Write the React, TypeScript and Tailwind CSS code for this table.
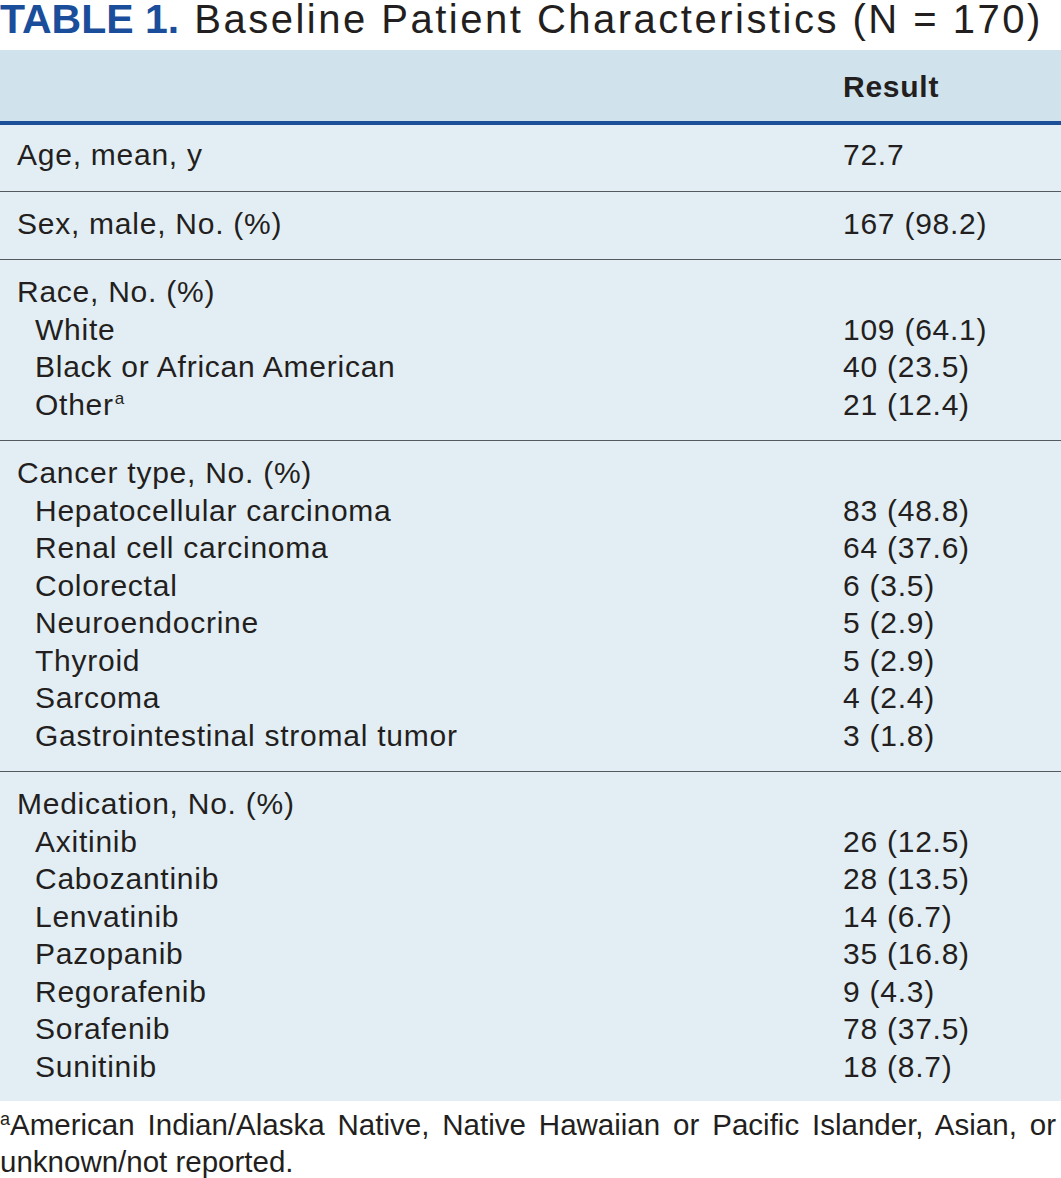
import React from "react";

type Item = { label: string; sup?: string; value: string };
type Group = { head: string; value?: string; items?: Item[]; pad: string };

const groups: Group[] = [
  { head: "Age, mean, y", value: "72.7", pad: "pt-[11px] pb-[17px]" },
  { head: "Sex, male, No. (%)", value: "167 (98.2)", pad: "pt-[13px] pb-[17px]" },
  {
    head: "Race, No. (%)",
    pad: "pt-[13px] pb-[17px]",
    items: [
      { label: "White", value: "109 (64.1)" },
      { label: "Black or African American", value: "40 (23.5)" },
      { label: "Other", sup: "a", value: "21 (12.4)" },
    ],
  },
  {
    head: "Cancer type, No. (%)",
    pad: "pt-[13px] pb-[17px]",
    items: [
      { label: "Hepatocellular carcinoma", value: "83 (48.8)" },
      { label: "Renal cell carcinoma", value: "64 (37.6)" },
      { label: "Colorectal", value: "6 (3.5)" },
      { label: "Neuroendocrine", value: "5 (2.9)" },
      { label: "Thyroid", value: "5 (2.9)" },
      { label: "Sarcoma", value: "4 (2.4)" },
      { label: "Gastrointestinal stromal tumor", value: "3 (1.8)" },
    ],
  },
  {
    head: "Medication, No. (%)",
    pad: "pt-[13px] pb-[16px]",
    items: [
      { label: "Axitinib", value: "26 (12.5)" },
      { label: "Cabozantinib", value: "28 (13.5)" },
      { label: "Lenvatinib", value: "14 (6.7)" },
      { label: "Pazopanib", value: "35 (16.8)" },
      { label: "Regorafenib", value: "9 (4.3)" },
      { label: "Sorafenib", value: "78 (37.5)" },
      { label: "Sunitinib", value: "18 (8.7)" },
    ],
  },
];

export default function App() {
  return (
    <div
      className="w-[1061px] h-[1178px] bg-white text-[#231f20] overflow-hidden"
      style={{ fontFamily: '"Liberation Sans", Arial, sans-serif' }}
    >
      <div className="h-[50px] whitespace-nowrap">
        <div className="text-[41px] leading-[39px]">
          <span className="font-bold text-[#1a4e9a]">TABLE 1.</span>
          <span className="ml-[15px] text-[40px] tracking-[2.5px]">Baseline Patient Characteristics (N = 170)</span>
        </div>
      </div>
      <div className="h-[71px] bg-[#d0e3ed] flex items-center text-[30px] leading-none tracking-[0.75px]">
        <div className="w-[843px]" />
        <div className="font-bold pt-[3px]">Result</div>
      </div>
      <div className="h-[4px] bg-[#1b4f98]" />
      <div className="bg-[#e3eef4] text-[30px] leading-[37.5px] tracking-[0.75px]">
        {groups.map((g, i) => (
          <div
            key={g.head}
            className={g.pad + (i < groups.length - 1 ? " border-b border-[#555a5e]" : "")}
          >
            <div className="flex">
              <div className="w-[843px] pl-[17px]">{g.head}</div>
              <div>{g.value}</div>
            </div>
            {g.items?.map((it) => (
              <div key={it.label} className="flex">
                <div className="w-[843px] pl-[35px]">
                  {it.label}
                  {it.sup && (
                    <span className="relative -top-[11px] text-[17px] leading-none ml-[1px]">{it.sup}</span>
                  )}
                </div>
                <div>{it.value}</div>
              </div>
            ))}
          </div>
        ))}
      </div>
      <div className="pt-[5px] text-[29.5px] leading-[37px] text-justify pr-[5px]">
        <span className="relative -top-[10px] text-[18px] leading-none">a</span>American Indian/Alaska Native, Native
        Hawaiian or Pacific Islander, Asian, or unknown/not reported.
      </div>
    </div>
  );
}
